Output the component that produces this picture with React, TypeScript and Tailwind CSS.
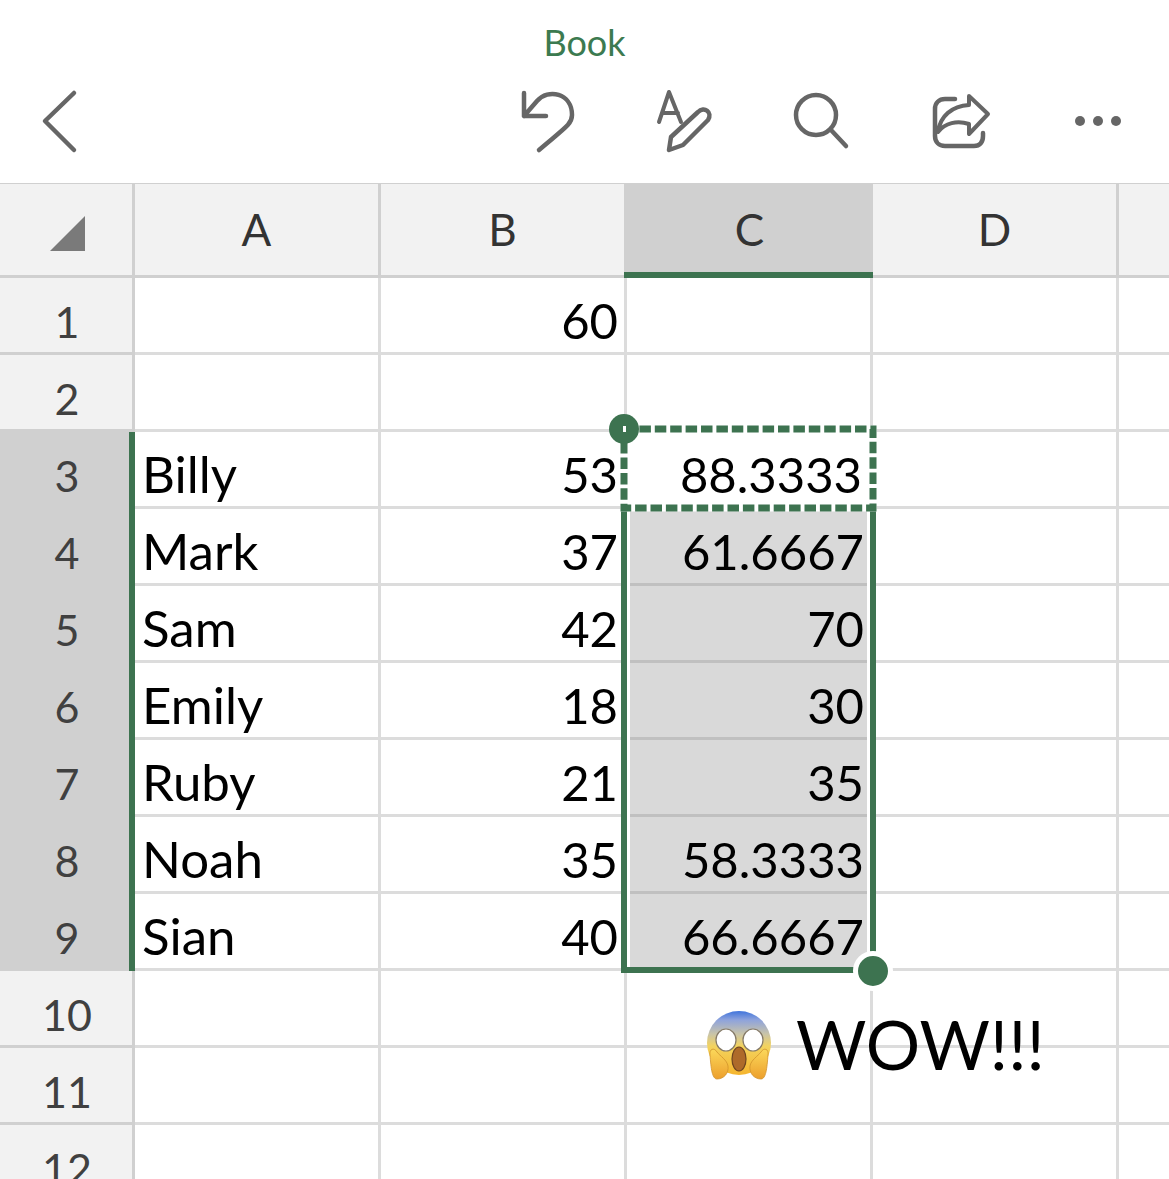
import React from "react";

const rows: { n: number; a?: string; b?: string; c?: string }[] = [
  { n: 1, b: "60" },
  { n: 2 },
  { n: 3, a: "Billy", b: "53", c: "88.3333" },
  { n: 4, a: "Mark", b: "37", c: "61.6667" },
  { n: 5, a: "Sam", b: "42", c: "70" },
  { n: 6, a: "Emily", b: "18", c: "30" },
  { n: 7, a: "Ruby", b: "21", c: "35" },
  { n: 8, a: "Noah", b: "35", c: "58.3333" },
  { n: 9, a: "Sian", b: "40", c: "66.6667" },
  { n: 10 },
  { n: 11 },
  { n: 12 },
];

const stroke = { fill: "none", stroke: "#666666", strokeWidth: 4.5, strokeLinecap: "round", strokeLinejoin: "round" } as const;

function Emoji() {
  return (
    <svg viewBox="0 0 66 70" className="absolute left-[706px] top-[1010px] h-[70px] w-[66px]">
      <defs>
        <linearGradient id="face" x1="0" y1="0" x2="0" y2="1">
          <stop offset="0" stopColor="#3f74dc" />
          <stop offset="0.14" stopColor="#8ea3dc" />
          <stop offset="0.36" stopColor="#c9c4a8" />
          <stop offset="0.55" stopColor="#f3d35e" />
          <stop offset="1" stopColor="#f5b52e" />
        </linearGradient>
        <linearGradient id="hand" x1="0" y1="0" x2="0" y2="1">
          <stop offset="0" stopColor="#fbd85a" />
          <stop offset="1" stopColor="#ec9f2c" />
        </linearGradient>
      </defs>
      <circle cx="33" cy="33" r="32" fill="url(#face)" />
      <ellipse cx="20" cy="30" rx="10" ry="11" fill="#fff" stroke="#857a68" strokeWidth="1.2" />
      <ellipse cx="47" cy="30" rx="10" ry="11" fill="#fff" stroke="#857a68" strokeWidth="1.2" />
      <ellipse cx="33" cy="49" rx="7" ry="12" fill="#ae6a2a" stroke="#6f4520" strokeWidth="1.2" />
      <path d="M4 45 C3 39 8 37 11 42 C14 46 21 50 22 56 C23 63 18 69 11 69 C6 69 5 58 4 45Z" fill="url(#hand)" stroke="#d0932c" strokeWidth="0.8" />
      <path d="M62 45 C63 39 58 37 55 42 C52 46 45 50 44 56 C43 63 48 69 55 69 C60 69 61 58 62 45Z" fill="url(#hand)" stroke="#d0932c" strokeWidth="0.8" />
    </svg>
  );
}

export default function App() {
  return (
    <div className="relative h-[1179px] w-[1169px] overflow-hidden bg-white font-['Lato',sans-serif]">
      <header className="flex h-[183px] flex-col">
        <div className="pt-[22px] text-center text-[36px] leading-[40px] text-[#3c7a50]">Book</div>
        <div className="mt-[26px] flex items-start">
          <svg viewBox="40 88 40 66" className="ml-[40px] h-[66px] w-[40px]">
            <polyline points="74,93 45,121 74,150" {...stroke} />
          </svg>
          <svg viewBox="518 88 60 66" className="ml-[438px] h-[66px] w-[60px]">
            <path d="M524 93 V116 H546 M524 116 L537 101 C548 88 572 93 572 115 C572 124 566 127 539 150" {...stroke} />
          </svg>
          <svg viewBox="652 88 64 66" className="ml-[74px] h-[66px] w-[64px]">
            <path d="M659 122 L669 92 L681 122 M662 113 H678" {...stroke} strokeWidth={4} />
            <path d="M669 150 L671 137 L698 112 C704 106 713 112 708 120 L683 145 Z" {...stroke} />
          </svg>
          <svg viewBox="790 88 62 66" className="ml-[74px] h-[66px] w-[62px]">
            <circle cx="816" cy="115" r="20" {...stroke} />
            <path d="M831 130 L846 146" {...stroke} />
          </svg>
          <svg viewBox="930 88 62 66" className="ml-[78px] h-[66px] w-[62px]">
            <path d="M955 99 H945 C939 99 935 103 935 109 V136 C935 142 939 146 945 146 H974 C980 146 983 142 983 136 V133" {...stroke} />
            <path d="M969 96 L988 114 L969 134 V124 C957 120 945 123 938 132 C940 116 952 106 969 105 Z" {...stroke} strokeWidth={4} />
          </svg>
          <svg viewBox="1072 112 52 18" className="ml-[80px] mt-[24px] h-[18px] w-[52px]">
            <circle cx="1080" cy="121" r="5" fill="#666666" />
            <circle cx="1098" cy="121" r="5" fill="#666666" />
            <circle cx="1116" cy="121" r="5" fill="#666666" />
          </svg>
        </div>
      </header>

      <div className="flex h-[95px] border-y-[3px] border-t-[1px] border-[#d0d0d0] bg-[#f2f2f2] text-[44px] leading-[91px] text-[#333333]">
        <div className="flex w-[135px] shrink-0 items-end border-r-[3px] border-[#d0d0d0] pb-[24px] pl-[50px]">
          <svg viewBox="0 0 35 35" className="h-[35px] w-[35px]">
            <polygon points="35,0 35,35 0,35" fill="#7a7a7a" />
          </svg>
        </div>
        <div className="w-[246px] shrink-0 border-r-[3px] border-[#d0d0d0] text-center">A</div>
        <div className="w-[243px] shrink-0 text-center">B</div>
        <div className="-mb-[3px] h-[94px] w-[249px] shrink-0 border-b-[6px] border-[#3d7350] bg-[#d0d0d0] pl-[2px] text-center">C</div>
        <div className="w-[246px] shrink-0 border-r-[3px] border-[#d0d0d0] text-center">D</div>
        <div className="flex-1" />
      </div>

      {rows.map((r) => {
        const active = r.n >= 3 && r.n <= 9;
        const filled = r.n >= 4 && r.n <= 9;
        return (
          <div key={r.n} className="flex h-[77px] text-[49px] leading-[84px] text-black tabular-nums">
            <div
              className={
                active
                  ? "w-[135px] shrink-0 border-r-[6px] border-[#3d7350] bg-[#d0d0d0] pl-[5px] text-center text-[43px] leading-[88px] text-[#404040]"
                  : "w-[135px] shrink-0 border-r-[3px] border-b-[3px] border-[#d0d0d0] bg-[#f2f2f2] pl-[2px] text-center text-[43px] leading-[88px] text-[#404040]"
              }
            >
              {r.n}
            </div>
            <div className="w-[246px] shrink-0 border-r-[3px] border-b-[3px] border-[#dcdcdc] pl-[7px] text-[51px]">{r.a}</div>
            <div className="w-[246px] shrink-0 border-r-[3px] border-b-[3px] border-[#dcdcdc] pr-[6px] text-right">{r.b}</div>
            {filled ? (
              <div className="w-[246px] shrink-0 pl-[3px] pr-[6px]">
                <div className={r.n === 9 ? "h-[74px] bg-[#d9d9d9] pr-[3px] text-right" : "h-[77px] border-b-[3px] border-[#c0c0c0] bg-[#d9d9d9] pr-[3px] text-right"}>
                  {r.c}
                </div>
              </div>
            ) : (
              <div className="w-[246px] shrink-0 border-r-[3px] border-b-[3px] border-[#dcdcdc] pr-[8px] text-right">{r.c}</div>
            )}
            <div className="w-[246px] shrink-0 border-r-[3px] border-b-[3px] border-[#dcdcdc]" />
            <div className="flex-1 border-b-[3px] border-[#dcdcdc]" />
          </div>
        );
      })}

      {/* selection */}
      <div className="absolute left-[621px] top-[506px] h-[467px] w-[255px] border-[6px] border-t-0 border-[#3d7350]" />
      <svg viewBox="620 424 258 90" className="absolute left-[620px] top-[424px] h-[90px] w-[258px]">
        <rect x="624" y="429" width="249" height="79" fill="none" stroke="#ffffff" strokeWidth="7" />
        <rect x="624" y="429" width="249" height="79" fill="none" stroke="#3d7350" strokeWidth="7" strokeDasharray="11.5 3.9" />
      </svg>
      <div className="absolute left-[609px] top-[414px] flex h-[30px] w-[30px] items-center justify-center rounded-full bg-[#3d7350]">
        <div className="h-[6px] w-[3px] bg-white" />
      </div>
      <div className="absolute left-[853px] top-[951px] h-[40px] w-[40px] rounded-full border-[5px] border-white bg-[#3d7350]" />

      <Emoji />
      <div className="absolute left-[796px] top-[1000px] text-[68px] leading-[88px] text-black">WOW!!!</div>
    </div>
  );
}
